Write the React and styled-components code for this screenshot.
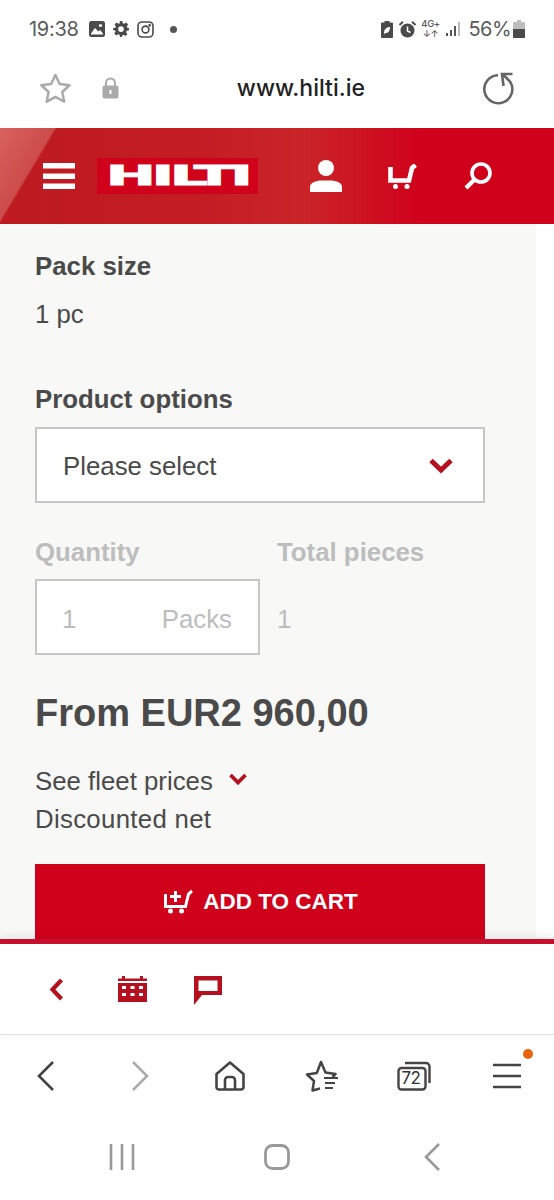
import React from "react";
import styled, { createGlobalStyle } from "styled-components";

const Global = createGlobalStyle`
  html, body { margin: 0; padding: 0; background: #fff; }
  * { box-sizing: border-box; }
`;

const RED = "#d0021b";
const DARK_RED = "#b5101f";
const INK = "#4a4a4a";

const Page = styled.div`
  width: 554px;
  height: 1200px;
  display: flex;
  flex-direction: column;
  overflow: hidden;
  background: #fff;
  font-family: "Liberation Sans", Arial, sans-serif;
  color: ${INK};
`;

const StatusBar = styled.div`
  height: 58px;
  flex: none;
  display: flex;
  align-items: center;
  padding: 0 28px 0 29px;
  color: #5a5a5a;
  font-family: Inter, "Liberation Sans", sans-serif;
  font-size: 20px;
`;
const StatusGroup = styled.div`
  display: flex;
  align-items: center;
  gap: ${(p) => p.$gap || 8}px;
  margin-left: ${(p) => p.$left || 0}px;
`;
const Clock = styled.span`
  margin-right: 2px;
  letter-spacing: -0.3px;
`;
const Dot = styled.span`
  width: 7px;
  height: 7px;
  border-radius: 50%;
  background: #555;
  margin-left: 8px;
`;
const Net = styled.span`
  font-size: 9.500px;
  line-height: 10px;
  font-weight: 500;
  width: 18px;
  text-align: center;
  letter-spacing: -0.4px;
  display: flex;
  flex-direction: column;
  white-space: nowrap;
  align-items: center;
`;
const Percent = styled.span`
  margin-left: 2px;
  margin-right: -4px;
  font-size: 20px;
  letter-spacing: -0.6px;
`;

const AddressBar = styled.div`
  height: 70px;
  flex: none;
  display: flex;
  align-items: center;
  padding: 0 39px 10px;
`;
const Url = styled.span`
  margin-left: 118px;
  font-family: Inter, "Liberation Sans", sans-serif;
  font-weight: 500;
  font-size: 23px;
  color: #222;
`;
const Push = styled.div`
  margin-left: ${(p) => p.$left}px;
  display: flex;
`;

const Header = styled.header`
  height: 96px;
  flex: none;
  display: flex;
  align-items: center;
  padding-left: 43px;
  background:
    linear-gradient(120.7deg, #d9625e 0, #cc4c4a 47px, rgba(200, 30, 40, 0) 49px),
    linear-gradient(90deg, #bd1a22 0, #c41c24 200px, #c92529 300px, ${RED} 420px);
`;
const Logo = styled.div`
  width: 161px;
  height: 36px;
  margin-left: 22px;
  background: ${RED};
  display: flex;
  align-items: center;
  justify-content: center;
  overflow: hidden;
`;
const LogoWord = styled.span`
  font-family: "DejaVu Sans", sans-serif;
  font-weight: 700;
  font-size: 27px;
  line-height: 36px;
  color: #fff;
  -webkit-text-stroke: 1px #fff;
  transform: scaleX(2.2);
  letter-spacing: -1.8px;
`;

const Main = styled.main`
  height: 715px;
  flex: none;
  display: flex;
  flex-direction: column;
  padding: 23px 0 0 35px;
  font-size: 25.8px;
  line-height: 38px;
  overflow: hidden;
  background: linear-gradient(90deg, #f8f8f6 536px, #fff 536px);
`;
const Label = styled.div`
  font-weight: 700;
  color: ${(p) => (p.$muted ? "#bdbdbd" : INK)};
  margin-top: ${(p) => p.$top || 0}px;
`;
const Value = styled.div`
  color: ${INK};
  margin-top: ${(p) => p.$top || 0}px;
  letter-spacing: ${(p) => p.$track || 0}px;
`;
const Select = styled.div`
  width: 450px;
  height: 76px;
  flex: none;
  margin-top: 9px;
  padding: 1px 30px 0 26px;
  background: #fff;
  border: 2px solid #c6c6c6;
  display: flex;
  align-items: center;
  justify-content: space-between;
`;
const QtyGrid = styled.div`
  display: grid;
  grid-template-columns: 225px auto;
  column-gap: 17px;
  margin-top: 30px;
  justify-content: start;
`;
const QtyInput = styled.div`
  height: 76px;
  margin-top: 8px;
  padding: 3px 26px 0 25px;
  background: #fff;
  border: 2px solid #c6c6c6;
  display: flex;
  align-items: center;
  justify-content: space-between;
  color: #bdbdbd;
`;
const QtyTotal = styled.div`
  height: 76px;
  margin-top: 8px;
  padding-top: 3px;
  display: flex;
  align-items: center;
  color: #bdbdbd;
`;
const Price = styled.div`
  font-size: 38px;
  line-height: 44px;
  font-weight: 700;
  color: ${INK};
  margin-top: 36px;
`;
const Fleet = styled.div`
  margin-top: 27px;
  display: flex;
  align-items: center;
  gap: 16px;
`;
const CartButton = styled.button`
  width: 450px;
  height: 75px;
  flex: none;
  margin-top: 26px;
  padding: 0 0 0 2px;
  border: 0;
  background: ${RED};
  color: #fff;
  font-family: inherit;
  font-size: 22.500px;
  font-weight: 700;
  display: flex;
  align-items: center;
  justify-content: center;
  gap: 10px;
`;

const PageTools = styled.div`
  position: relative;
  height: 96px;
  flex: none;
  background: #fff;
  border-top: 5px solid #c8102e;
  border-bottom: 1px solid #e2e2e2;
  box-shadow: 0 -3px 10px rgba(0, 0, 0, 0.08);
  display: grid;
  grid-template-columns: repeat(3, 76px);
  padding-left: 18px;
  align-items: center;
  justify-items: center;
`;
const BrowserNav = styled.nav`
  height: 85px;
  flex: none;
  padding-bottom: 3px;
  display: grid;
  grid-template-columns: repeat(6, 92px);
  align-items: center;
  justify-items: center;
`;
const MenuSlot = styled.div`
  position: relative;
  display: flex;
  margin-left: 2px;
`;
const Badge = styled.span`
  position: absolute;
  top: -14px;
  right: -12px;
  width: 10px;
  height: 10px;
  border-radius: 50%;
  background: #e8640f;
`;
const SystemNav = styled.div`
  height: 80px;
  flex: none;
  display: grid;
  grid-template-columns: repeat(3, 155px);
  padding: 0 0 6px 44.5px;
  align-items: center;
  justify-items: center;
`;
const TabsIcon = styled.div`
  position: relative;
  width: 34px;
  height: 30px;
  display: flex;
`;
const TabsCount = styled.span`
  position: absolute;
  left: 1px;
  top: 7px;
  width: 26px;
  text-align: center;
  font-family: Inter, "Liberation Sans", sans-serif;
  font-size: 17px;
  line-height: 20px;
  letter-spacing: -0.5px;
  color: #333;
`;

const Chevron = () => (
  <svg width="24" height="16" viewBox="0 0 24 16" fill="none">
    <path d="M2 2.500 12 12 22 2.500" stroke={DARK_RED} strokeWidth="5" />
  </svg>
);

const SmallChevron = () => (
  <svg width="18" height="12" viewBox="0 0 18 12" fill="none" style={{ marginTop: -4 }}>
    <path d="M1.500 2 9 9.500 16.500 2" stroke={DARK_RED} strokeWidth="3.800" />
  </svg>
);

export default function App() {
  return (
    <Page>
      <Global />
      <StatusBar>
        <StatusGroup $gap={8}>
          <Clock>19:38</Clock>
          <svg width="16" height="16" viewBox="0 0 16 16">
            <rect width="16" height="16" rx="2.500" fill="#4a4a4a" />
            <circle cx="11.500" cy="4.500" r="1.600" fill="#fff" />
            <path d="M2 12.500 6 7l3.500 3.500L11 9l3 3.500v1H2z" fill="#fff" />
          </svg>
          <svg width="16" height="16" viewBox="0 0 24 24">
            <path
              fill="#4a4a4a"
              fillRule="evenodd"
              d="M10 0h4l.7 3.400 2.200.9L19.800 2.400l2.800 2.800-1.900 2.900.9 2.200L24 11v3l-3.400.7-.9 2.200 1.900 2.900-2.800 2.800-2.900-1.900-2.200.9L13.500 24h-3l-.7-3.400-2.200-.9-2.900 1.900-2.800-2.800 1.900-2.900-.9-2.200L0 14v-3l3.400-.7.9-2.200-1.900-2.900 2.800-2.800 2.900 1.900 2.200-.9zM12 8a4.200 4.200 0 1 0 0 8.400A4.200 4.200 0 0 0 12 8z"
            />
          </svg>
          <svg width="17" height="17" viewBox="0 0 17 17" fill="none" stroke="#4a4a4a" strokeWidth="1.600">
            <rect x="1" y="1" width="15" height="15" rx="4" />
            <circle cx="8.500" cy="8.500" r="3.400" />
            <circle cx="12.700" cy="4.300" r=".6" fill="#4a4a4a" />
          </svg>
          <Dot />
        </StatusGroup>
        <StatusGroup $gap={6} $left={204}>
          <svg width="12" height="17" viewBox="0 0 12 17">
            <path d="M3.500 0h5v1.500H11a1 1 0 0 1 1 1V16a1 1 0 0 1-1 1H1a1 1 0 0 1-1-1V2.500a1 1 0 0 1 1-1h2.500z" fill="#4a4a4a" />
            <path d="M3 12c0-4 3-6 6-6 0 4-2 6.500-5 6l-1 1.500z" fill="#fff" />
          </svg>
          <svg width="17" height="17" viewBox="0 0 17 17">
            <circle cx="8.500" cy="9.500" r="7" fill="#4a4a4a" />
            <path d="M8.500 5.500v4.500l3 1.500" stroke="#fff" strokeWidth="1.500" fill="none" />
            <path d="M.5 4 4 .8M16.500 4 13 .8" stroke="#4a4a4a" strokeWidth="2" />
          </svg>
          <Net>
            <span>4G+</span>
            <span>↓↑</span>
          </Net>
          <svg width="15" height="14" viewBox="0 0 15 14">
            <rect x="0" y="11" width="2" height="3" fill="#555" />
            <rect x="4" y="8" width="2" height="6" fill="#555" />
            <rect x="8" y="4" width="2" height="10" fill="#555" />
            <rect x="12" y="0" width="2" height="14" fill="#bbb" />
          </svg>
          <Percent>56%</Percent>
          <svg width="12" height="18" viewBox="0 0 12 18">
            <path d="M4 0h4v2h3a1 1 0 0 1 1 1v14a1 1 0 0 1-1 1H1a1 1 0 0 1-1-1V3a1 1 0 0 1 1-1h3z" fill="#bdbdbd" />
            <path d="M0 9h12v8a1 1 0 0 1-1 1H1a1 1 0 0 1-1-1z" fill="#4a4a4a" />
          </svg>
        </StatusGroup>
      </StatusBar>

      <AddressBar>
        <svg width="34" height="33" viewBox="0 0 34 33" fill="none">
          <path
            d="M17 2.500l4.400 9.300 10.100 1.300-7.400 7 1.900 10-9-4.900-9 4.900 1.900-10-7.400-7 10.100-1.300z"
            stroke="#aaa"
            strokeWidth="2.600"
            strokeLinejoin="round"
          />
        </svg>
        <Push $left={30}>
          <svg width="17" height="22" viewBox="0 0 17 22">
            <path d="M4 9V6a4.500 4.500 0 0 1 9 0v3" stroke="#aaa" strokeWidth="2" fill="none" />
            <rect x="0.500" y="8.500" width="16" height="13" rx="2" fill="#aaa" />
            <rect x="7.500" y="13" width="2" height="4" fill="#fff" />
          </svg>
        </Push>
        <Url>www.hilti.ie</Url>
        <Push $left={118}>
          <svg width="32" height="33" viewBox="0 0 32 33" fill="none" stroke="#666" strokeWidth="2.600">
            <path d="M15 3.200A14 14 0 1 0 27 9.500L20 2.500" />
            <path d="M29.500 2H19l1.500 12" />
          </svg>
        </Push>
      </AddressBar>

      <Header>
        <svg width="32" height="26" viewBox="0 0 32 26" fill="#fff">
          <rect width="32" height="5.500" />
          <rect y="10.500" width="32" height="5.500" />
          <rect y="20.500" width="32" height="5.500" />
        </svg>
        <Logo>
          <LogoWord>HILTI</LogoWord>
        </Logo>
        <Push $left={52}>
          <svg width="32" height="32" viewBox="0 0 32 32" fill="#fff">
            <circle cx="16" cy="8" r="8" />
            <path d="M0 32v-5c0-4 5-6 10-6.500h12c5 .5 10 2.500 10 6.500v5z" />
          </svg>
        </Push>
        <Push $left={46}>
          <svg width="29" height="25" viewBox="0 0 29 25" fill="none">
            <path d="M2.500 3v13.500H21L24 4l3.500-3" stroke="#fff" strokeWidth="4.600" />
            <circle cx="7.500" cy="22.500" r="2.500" fill="#fff" />
            <circle cx="19" cy="22.500" r="2.500" fill="#fff" />
          </svg>
        </Push>
        <Push $left={47}>
          <svg width="29" height="28" viewBox="0 0 29 28" fill="none" stroke="#fff">
            <circle cx="17" cy="11" r="9" strokeWidth="3.600" />
            <path d="M10 18 2 26" strokeWidth="4.200" />
          </svg>
        </Push>
      </Header>

      <Main>
        <Label>Pack size</Label>
        <Value $top={10}>1 pc</Value>
        <Label $top={47}>Product options</Label>
        <Select>
          <span>Please select</span>
          <Chevron />
        </Select>
        <QtyGrid>
          <Label $muted>Quantity</Label>
          <Label $muted>Total pieces</Label>
          <QtyInput>
            <span>1</span>
            <span>Packs</span>
          </QtyInput>
          <QtyTotal>1</QtyTotal>
        </QtyGrid>
        <Price>From EUR2 960,00</Price>
        <Fleet>
          <span>See fleet prices</span>
          <SmallChevron />
        </Fleet>
        <Value $track={0.3}>Discounted net</Value>
        <CartButton>
          <svg width="29" height="25" viewBox="0 0 29 25" fill="none" stroke="#fff">
            <path d="M1.500 5v12.500h20L24.500 5l3.500-3" strokeWidth="3" />
            <path d="M11.500 2v11M6 7.500h11" strokeWidth="3" />
            <circle cx="6.500" cy="22" r="2.500" fill="#fff" stroke="none" />
            <circle cx="17.500" cy="22" r="2.500" fill="#fff" stroke="none" />
          </svg>
          ADD TO CART
        </CartButton>
      </Main>

      <PageTools>
        <svg width="15" height="23" viewBox="0 0 15 23" fill="none">
          <path d="M12.500 2 3.500 11.500l9 9.500" stroke={DARK_RED} strokeWidth="4.200" />
        </svg>
        <svg width="29" height="26" viewBox="0 0 29 26">
          <path
            fill={DARK_RED}
            fillRule="evenodd"
            d="M4 0h3v2.500h15V0h3v2.500h4V5H0V2.500h4zM0 7h29v19H0zM4 10v3h4v-3zM12.500 10v3h4v-3zM21 10v3h4v-3zM4 17v3h4v-3zM12.500 17v3h4v-3zM21 17v3h4v-3z"
          />
        </svg>
        <svg width="28" height="29" viewBox="0 0 28 29" style={{ marginTop: 3 }}>
          <path fill={DARK_RED} fillRule="evenodd" d="M0 0H28V19H8L0 29ZM4.500 4.500V15H23.500V4.500Z" />
        </svg>
      </PageTools>

      <BrowserNav>
        <svg width="20" height="32" viewBox="0 0 20 32" fill="none">
          <path d="M17 2 3 16l14 14" stroke="#444" strokeWidth="2.600" />
        </svg>
        <svg width="20" height="32" viewBox="0 0 20 32" fill="none" style={{ marginLeft: 4 }}>
          <path d="M3 2l14 14L3 30" stroke="#aaa" strokeWidth="2.600" />
        </svg>
        <svg width="30" height="30" viewBox="0 0 30 30" fill="none" stroke="#444" strokeWidth="2.600">
          <path d="M1.500 13 15 1.500 28.500 13v13a2.500 2.500 0 0 1-2.500 2.500H4A2.500 2.500 0 0 1 1.500 26z" strokeLinejoin="round" />
          <path d="M10 28v-9a3 3 0 0 1 3-3h4a3 3 0 0 1 3 3v9" />
        </svg>
        <svg width="34" height="32" viewBox="0 0 34 32" fill="none" stroke="#444" strokeWidth="2.500">
          <path d="M15 28.500 7.500 30.500l1.500-9.500-7-6.500 9.800-1.500L16 2l4.500 10.500 10 1.500-3 3" strokeLinejoin="round" />
          <path d="M19 18h14M20 23h10M20 28h8" strokeWidth="2" />
        </svg>
        <TabsIcon>
          <svg width="34" height="30" viewBox="0 0 34 30" fill="none" stroke="#444" strokeWidth="2.400">
            <rect x="1.500" y="7" width="27" height="21.500" rx="3" />
            <path d="M8 2h21a3.500 3.500 0 0 1 3.500 3.500V22" />
          </svg>
          <TabsCount>72</TabsCount>
        </TabsIcon>
        <MenuSlot>
          <svg width="28" height="26" viewBox="0 0 28 26" stroke="#444" strokeWidth="2.400">
            <path d="M0 2h28M0 13h28M0 24h28" />
          </svg>
          <Badge />
        </MenuSlot>
      </BrowserNav>

      <SystemNav>
        <svg width="26" height="26" viewBox="0 0 26 26" stroke="#999" strokeWidth="2.600">
          <path d="M2 0v26M13 0v26M24 0v26" />
        </svg>
        <svg width="26" height="26" viewBox="0 0 26 26" fill="none" stroke="#999" strokeWidth="2.800">
          <rect x="1.500" y="1.500" width="23" height="23" rx="7" />
        </svg>
        <svg width="16" height="28" viewBox="0 0 16 28" fill="none" stroke="#999" strokeWidth="2.600">
          <path d="M15 1 2 14l13 13" />
        </svg>
      </SystemNav>
    </Page>
  );
}
